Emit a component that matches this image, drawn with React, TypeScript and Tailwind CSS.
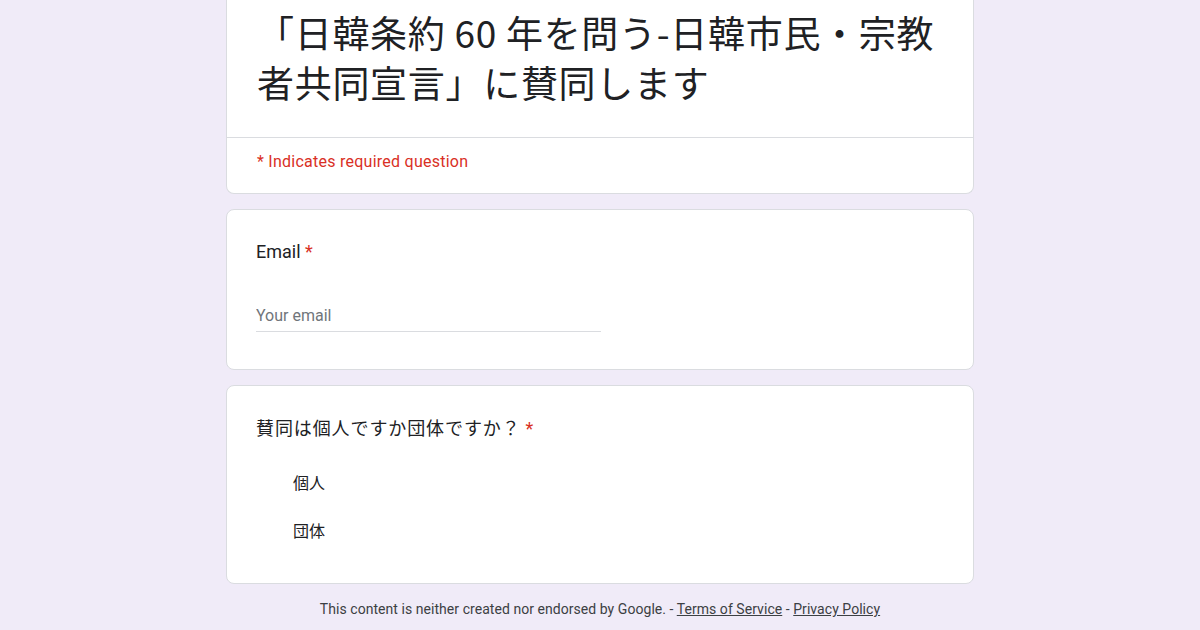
export default function App() {
  const jp = { fontFamily: '"Noto Sans CJK JP", "Noto Sans", sans-serif' };
  const rb = { fontFamily: 'Roboto, "Noto Sans CJK JP", sans-serif' };

  return (
    <div className="min-h-[630px] w-full bg-[#f0ebf8] flex flex-col items-center text-[#202124]">
      <div className="w-[748px] flex flex-col gap-[15px]">
        {/* title card */}
        <div className="bg-white border border-t-0 border-[#dadce0] rounded-b-lg">
          <div className="px-[30px] pt-[7px] pb-[30px]">
            <h1 className="text-[37px] leading-[50px] tracking-[0.7px] font-normal" style={jp}>
              「日韓条約 60 年を問う-日韓市民・宗教者共同宣言」に賛同します
            </h1>
          </div>
          <div className="border-t border-[#dadce0] px-[30px] pt-[12px] pb-[19px]">
            <p className="text-[16px] leading-[24px] tracking-[0.25px] text-[#d93025]" style={rb}>
              * Indicates required question
            </p>
          </div>
        </div>

        {/* email card */}
        <div className="bg-white border border-[#dadce0] rounded-lg px-[29px] pt-[30px] pb-[37px]">
          <div className="text-[18px] leading-[24px]" style={rb}>
            Email <span className="text-[#d93025]">*</span>
          </div>
          <div className="mt-[39px] w-[345px] border-b border-[#dadce0] pb-[3px]">
            <input
              className="w-full text-[16px] leading-[24px] outline-none placeholder:text-[#70757a]"
              style={rb}
              placeholder="Your email"
            />
          </div>
        </div>

        {/* radio card */}
        <div className="bg-white border border-[#dadce0] rounded-lg px-[29px] pt-[29px] pb-[41px]">
          <div className="text-[18px] leading-[24px] tracking-[0.9px]" style={jp}>
            賛同は個人ですか団体ですか？ <span className="text-[#d93025]" style={rb}>*</span>
          </div>
          <div className="mt-[29px] flex flex-col gap-[24px] pl-[37px]">
            <div className="text-[16px] leading-[24px]" style={jp}>個人</div>
            <div className="text-[16px] leading-[24px]" style={jp}>団体</div>
          </div>
        </div>
      </div>

      <div className="mt-[13px] text-[14px] leading-[24px] tracking-[0.05px] text-[#3c4043]" style={rb}>
        This content is neither created nor endorsed by Google. -{" "}
        <span className="underline">Terms of Service</span> -{" "}
        <span className="underline">Privacy Policy</span>
      </div>
    </div>
  );
}
